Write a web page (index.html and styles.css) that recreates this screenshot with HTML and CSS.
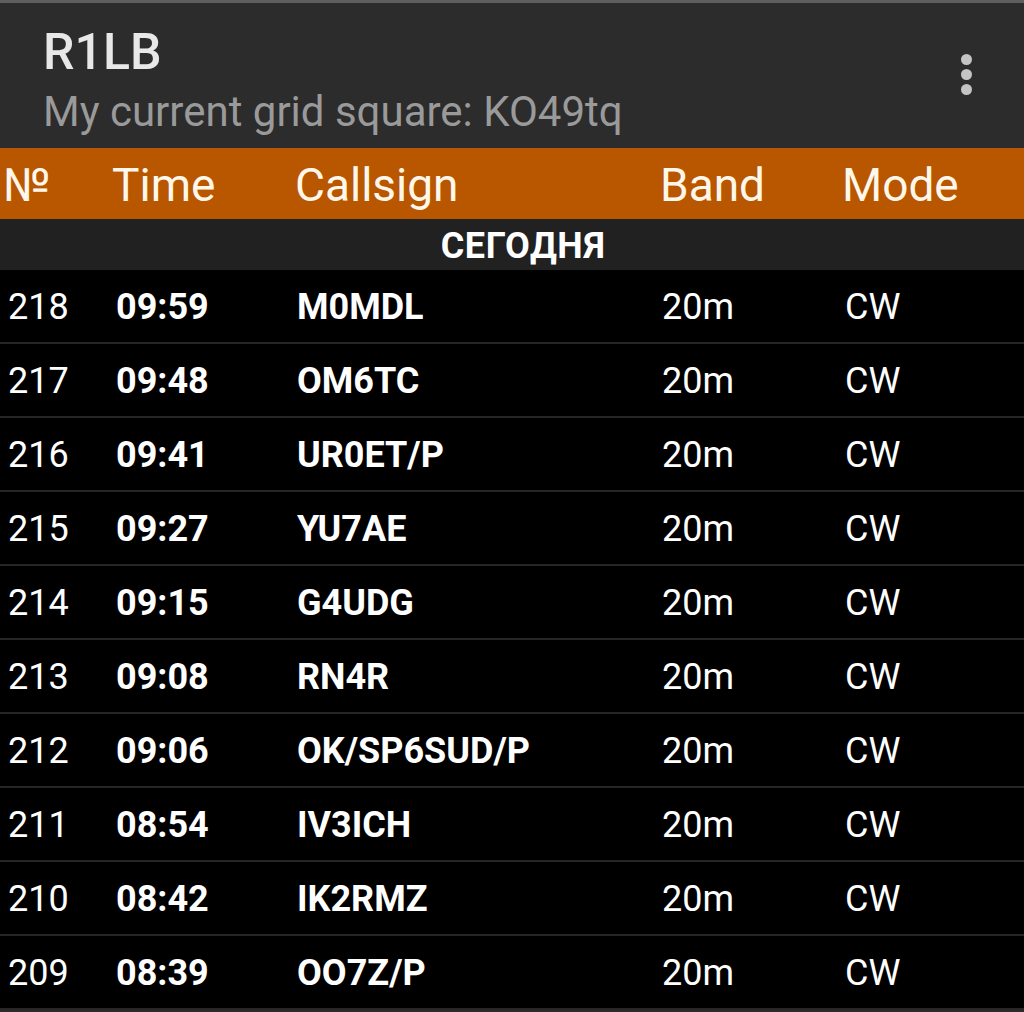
FILE: index.html
```html
<!DOCTYPE html>
<html>
<head>
<meta charset="utf-8">
<link rel="stylesheet" href="styles.css">
</head>
<body>
<div class="app">
  <div class="status-edge"></div>
  <header class="toolbar">
    <div class="titles">
      <div class="title">R1LB</div>
      <div class="subtitle">My current grid square: KO49tq</div>
    </div>
    <div class="menu">
      <span class="dot"></span><span class="dot"></span><span class="dot"></span>
    </div>
  </header>
  <div class="colhead">
    <span class="c-num">№</span>
    <span class="c-time">Time</span>
    <span class="c-call">Callsign</span>
    <span class="c-band">Band</span>
    <span class="c-mode">Mode</span>
  </div>
  <div class="section">СЕГОДНЯ</div>
  <div class="rows">
    <div class="row"><span class="c-num">218</span><span class="c-time b">09:59</span><span class="c-call b">M0MDL</span><span class="c-band">20m</span><span class="c-mode">CW</span></div>
    <div class="row"><span class="c-num">217</span><span class="c-time b">09:48</span><span class="c-call b">OM6TC</span><span class="c-band">20m</span><span class="c-mode">CW</span></div>
    <div class="row"><span class="c-num">216</span><span class="c-time b">09:41</span><span class="c-call b">UR0ET/P</span><span class="c-band">20m</span><span class="c-mode">CW</span></div>
    <div class="row"><span class="c-num">215</span><span class="c-time b">09:27</span><span class="c-call b">YU7AE</span><span class="c-band">20m</span><span class="c-mode">CW</span></div>
    <div class="row"><span class="c-num">214</span><span class="c-time b">09:15</span><span class="c-call b">G4UDG</span><span class="c-band">20m</span><span class="c-mode">CW</span></div>
    <div class="row"><span class="c-num">213</span><span class="c-time b">09:08</span><span class="c-call b">RN4R</span><span class="c-band">20m</span><span class="c-mode">CW</span></div>
    <div class="row"><span class="c-num">212</span><span class="c-time b">09:06</span><span class="c-call b">OK/SP6SUD/P</span><span class="c-band">20m</span><span class="c-mode">CW</span></div>
    <div class="row"><span class="c-num">211</span><span class="c-time b">08:54</span><span class="c-call b">IV3ICH</span><span class="c-band">20m</span><span class="c-mode">CW</span></div>
    <div class="row"><span class="c-num">210</span><span class="c-time b">08:42</span><span class="c-call b">IK2RMZ</span><span class="c-band">20m</span><span class="c-mode">CW</span></div>
    <div class="row"><span class="c-num">209</span><span class="c-time b">08:39</span><span class="c-call b">OO7Z/P</span><span class="c-band">20m</span><span class="c-mode">CW</span></div>
  </div>
</div>
</body>
</html>
```

FILE: styles.css
```css
* { box-sizing: border-box; margin: 0; padding: 0; }
html, body { background: #2b2b2b; }
body { margin: 0; font-family: Roboto, "Noto Sans", "DejaVu Sans", sans-serif; overflow: hidden; }
.app { width: 1024px; height: 1012px; background: #2b2b2b; }
.status-edge { height: 3px; background: #5e5e5e; }
.toolbar {
  height: 145px;
  background: #2c2c2c;
  display: flex;
  align-items: flex-start;
  justify-content: space-between;
  padding: 0 0 0 43px;
}
.titles { display: flex; flex-direction: column; padding-top: 21px; }
.title { font-size: 50px; font-weight: 500; color: #e8e8e8; line-height: 56px; }
.subtitle { font-size: 42px; color: #9a9a9a; line-height: 52px; margin-top: 6px; }
.menu {
  width: 60px;
  margin-right: 28px;
  padding-top: 51px;
  display: flex;
  flex-direction: column;
  align-items: center;
  gap: 4px;
}
.dot { width: 11px; height: 11px; border-radius: 50%; background: #c4c4c4; }
.colhead {
  height: 71px;
  background: #b95600;
  display: flex;
  align-items: center;
  color: #fff8ea;
  font-size: 46px;
  padding-top: 3px;
}
.c-num { width: 112px; padding-left: 3px; }
.c-time { width: 183px; }
.c-call { width: 365px; }
.c-band { width: 182px; }
.c-mode { flex: 1; }
.row .c-num { width: 116px; padding-left: 8px; }
.row .c-time { width: 181px; }
.row .c-call { width: 365px; }
.row .c-band { width: 183px; }
.section {
  height: 51px;
  background: #212121;
  color: #ffffff;
  font-weight: 700;
  font-size: 36px;
  letter-spacing: 0.6px;
  text-align: center;
  padding-left: 22px;
  line-height: 54px;
}
.rows { background: #000; }
.row {
  height: 74px;
  display: flex;
  align-items: center;
  border-bottom: 2px solid #262626;
  color: #ffffff;
  font-size: 36px;
  padding-top: 2px;
}
.b { font-weight: 700; }
```
